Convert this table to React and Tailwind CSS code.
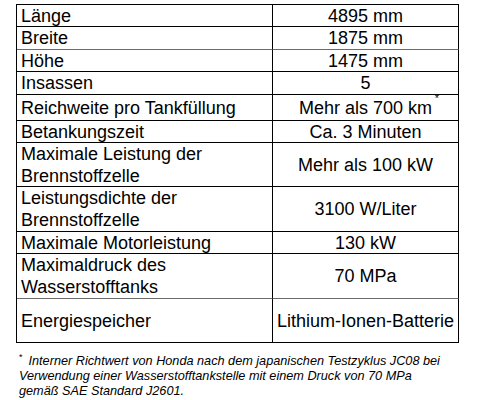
import React from "react";

const rows = [
  { label: ["Länge"], value: "4895 mm", h: "h-[22px]" },
  { label: ["Breite"], value: "1875 mm", h: "h-[23px]", gray: true },
  { label: ["Höhe"], value: "1475 mm", h: "h-[22px]" },
  { label: ["Insassen"], value: "5", h: "h-[23px]" },
  { label: ["Reichweite pro Tankfüllung"], value: "Mehr als 700 km", star: true, h: "h-[26px]" },
  { label: ["Betankungszeit"], value: "Ca. 3 Minuten", h: "h-[22px]" },
  { label: ["Maximale Leistung der", "Brennstoffzelle"], value: "Mehr als 100 kW", h: "h-[44px]" },
  { label: ["Leistungsdichte der", "Brennstoffzelle"], value: "3100 W/Liter", h: "h-[45px]" },
  { label: ["Maximale Motorleistung"], value: "130 kW", h: "h-[22px]" },
  { label: ["Maximaldruck des", "Wasserstofftanks"], value: "70 MPa", h: "h-[45px]", gray: true },
  { label: ["Energiespeicher"], value: "Lithium-Ionen-Batterie", h: "h-[44px]" },
];

const App = () => {
  return (
    <div
      className="w-[488px] h-[400px] bg-white text-black overflow-hidden"
      style={{ fontFamily: '"Liberation Sans", Arial, sans-serif' }}
    >
      {/* Spec table */}
      <div className="ml-[16px] mt-[4px] w-[443px] border-t border-l border-black grid grid-cols-[256px_186px]">
        {rows.map((row, i) => (
          <React.Fragment key={i}>
            <div
              className={`${row.h} border-r border-b ${
                row.gray ? "border-b-[#6b6b6b]" : ""
              } border-r-black border-black pl-[4px] flex flex-col justify-center text-[18px] leading-[22px]`}
            >
              {row.label.map((l, j) => (
                <span key={j} className="whitespace-nowrap">
                  {l}
                </span>
              ))}
            </div>
            <div
              className={`${row.h} border-r border-b ${
                row.gray ? "border-b-[#6b6b6b]" : ""
              } border-r-black border-black flex items-center justify-center text-[18px] leading-[22px]`}
            >
              <span className="whitespace-nowrap relative">
                {row.value}
                {row.star && (
                  <span className="absolute -right-[7px] -top-[4px] text-[11px] leading-none">*</span>
                )}
              </span>
            </div>
          </React.Fragment>
        ))}
      </div>

      {/* Footnote */}
      <div className="mt-[7px] pl-[19px] pr-[16px] text-[12.7px] leading-[15px] italic">
        <span className="not-italic text-[9px] align-[5px] mr-[6px]">*</span>
        Interner Richtwert von Honda nach dem japanischen Testzyklus JC08 bei
        <br />
        Verwendung einer Wasserstofftankstelle mit einem Druck von 70 MPa
        <br />
        gemäß SAE Standard J2601.
      </div>
    </div>
  );
};

export default App;
